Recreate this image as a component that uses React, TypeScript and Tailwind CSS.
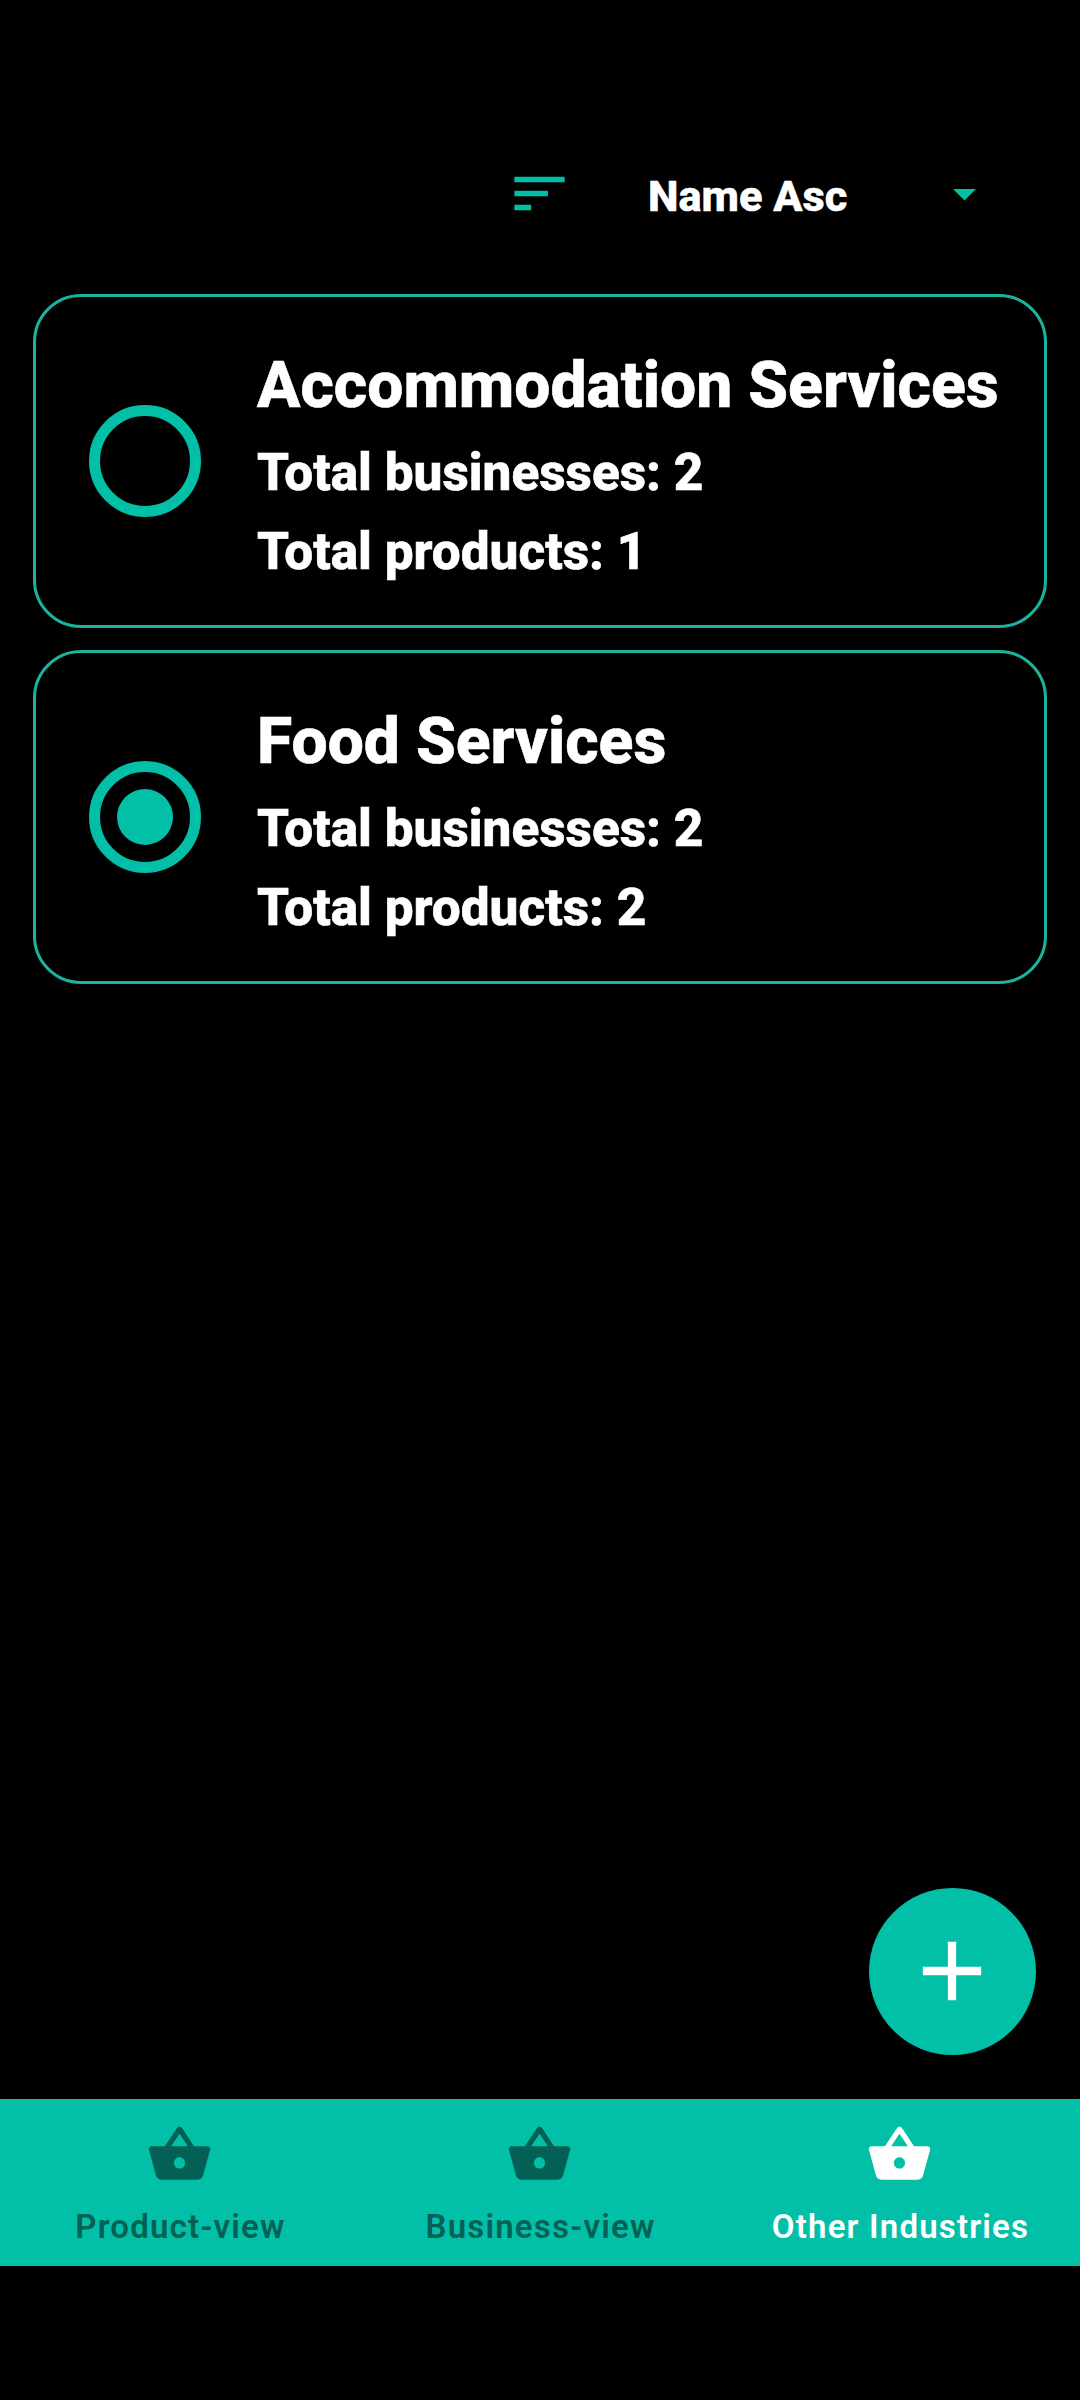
const teal = '#02c0a7';

function Basket() {
  return (
    <svg viewBox="0 0 24 24" className="mr-[1px] h-[67px] w-[67px]" fill="currentColor">
      <path d="M17.21 9l-4.38-6.56c-.19-.28-.51-.42-.83-.42-.32 0-.64.14-.83.43L6.79 9H2c-.55 0-1 .45-1 1 0 .09.01.18.04.27l2.54 9.27c.23.84 1 1.46 1.92 1.46h13c.92 0 1.69-.62 1.93-1.46l2.54-9.27L23 10c0-.55-.45-1-1-1h-4.79zM9 9l3-4.4L15 9H9zm3 8c-1.1 0-2-.9-2-2s.9-2 2-2 2 .9 2 2-.9 2-2 2z" />
    </svg>
  );
}

function Card({ title, businesses, products, selected }: { title: string; businesses: number; products: number; selected?: boolean }) {
  return (
    <div className="flex h-[334px] items-center rounded-[48px] border-[3px] border-[#1bb39d]">
      <div className="ml-[53px] flex h-[112px] w-[112px] shrink-0 items-center justify-center rounded-full border-[11px] border-[#02c0a7]">
        {selected && <div className="h-[56px] w-[56px] rounded-full bg-[#02c0a7]" />}
      </div>
      <div className="mt-[8px] ml-[56px] font-extrabold whitespace-nowrap [-webkit-text-stroke:0.6px_white]">
        <div className="h-[94px] text-[64.2px] leading-[92px]">{title}</div>
        <div className="h-[79px] text-[51.3px] leading-[79px]">Total businesses: {businesses}</div>
        <div className="h-[79px] text-[51.3px] leading-[79px]">Total products: {products}</div>
      </div>
    </div>
  );
}

const tabs = ['Product-view', 'Business-view', 'Other Industries'];

export default function App() {
  return (
    <div className="flex h-[2400px] w-[1080px] flex-col bg-black font-['Roboto',sans-serif] text-white">
      <div className="flex h-[294px] items-center pt-[93px] pl-[506px]">
        <svg viewBox="0 0 24 24" className="h-[67px] w-[67px]" fill={teal}>
          <path d="M3 18h6v-2H3v2zM3 6v2h18V6H3zm0 7h12v-2H3v2z" />
        </svg>
        <div className="mt-[7px] ml-[75px] w-[289px] text-[43.3px] font-extrabold [-webkit-text-stroke:0.5px_white]">Name Asc</div>
        <svg viewBox="0 0 24 24" className="h-[55px] w-[55px]" fill={teal}>
          <path d="M7 10l5 5 5-5z" />
        </svg>
      </div>
      <div className="flex flex-1 flex-col gap-[22px] px-[33px]">
        <Card title="Accommodation Services" businesses={2} products={1} />
        <Card title="Food Services" businesses={2} products={2} selected />
      </div>
      <div className="mr-[44px] mb-[44px] flex h-[167px] w-[167px] items-center justify-center self-end rounded-full bg-[#02c0a7]">
        <svg viewBox="0 0 24 24" className="mr-[1px] mb-[1px] h-[100px] w-[100px]" fill="white">
          <path d="M19 13h-6v6h-2v-6H5v-2h6V5h2v6h6v2z" />
        </svg>
      </div>
      <div className="mb-[134px] grid h-[167px] shrink-0 grid-cols-3 bg-[#02c0a7]">
        {tabs.map((t, i) => (
          <div key={t} className={`flex flex-col items-center pt-[22px] ${i === 2 ? 'text-white' : 'text-[#026054]'}`}>
            <Basket />
            <div className="mt-[17px] ml-[1px] text-[33px] leading-[44px] font-semibold tracking-[1.2px]">{t}</div>
          </div>
        ))}
      </div>
    </div>
  );
}
